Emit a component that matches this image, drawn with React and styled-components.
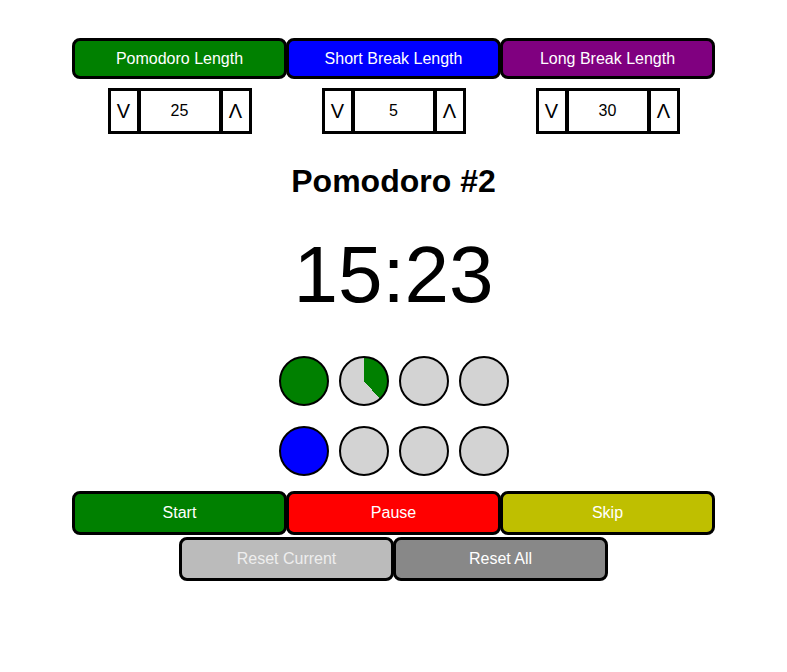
import styled, { createGlobalStyle } from 'styled-components';

const GlobalStyle = createGlobalStyle`
    body {
        margin: 0;
        font-family: "Liberation Sans", Arial, sans-serif;
        background: #fff;
    }
`

const Page = styled.div`
    display: flex;
    flex-direction: column;
    align-items: center;
    padding-top: 38px;
`

const Row = styled.div`
    display: flex;
    justify-content: center;
    margin-top: ${props => props.$top || 0}px;
`

const Column = styled.div`
    display: flex;
    flex-direction: column;
    align-items: center;
    gap: 9px;
`

const Button = styled.button`
    width: 215px;
    height: ${props => props.$height || 44}px;
    border: 3px solid #000;
    border-radius: 8px;
    background: ${props => props.$bg};
    color: ${props => props.$color || '#fff'};
    font-family: inherit;
    font-size: 16px;
    padding: 0;
    margin: 0 -0.5px;
`

const Stepper = styled.div`
    display: flex;
    height: 46px;
`

const Arrow = styled.button`
    width: 32px;
    height: 46px;
    border: 3px solid #000;
    background: #fff;
    color: #000;
    font-family: inherit;
    font-size: 20px;
    padding: 0;
`

const Value = styled.input`
    box-sizing: border-box;
    width: 80px;
    height: 46px;
    border: 3px solid #000;
    border-left: 1px solid #000;
    border-right: 1px solid #000;
    text-align: center;
    font-family: inherit;
    font-size: 16px;
    color: #000;
    padding: 0;
`

const Title = styled.h1`
    font-size: 32px;
    font-weight: bold;
    margin: 29px 0 0;
`

const Timer = styled.div`
    font-size: 80px;
    margin-top: 29px;
    line-height: 92px;
`

const Dots = styled.div`
    display: flex;
    gap: 10px;
    margin-top: ${props => props.$top}px;
`

const Dot = styled.div`
    box-sizing: border-box;
    width: 50px;
    height: 50px;
    border-radius: 50%;
    border: 2px solid #000;
    background: ${props => props.$fill || '#d3d3d3'};
`

const lengths = [
    { label: 'Pomodoro Length', bg: '#008000', value: 25 },
    { label: 'Short Break Length', bg: '#0000ff', value: 5 },
    { label: 'Long Break Length', bg: '#800080', value: 30 },
]

function App() {
    // 9:37 of the 25 minutes gone
    const progress = 577 / 1500 * 360

    return (
        <>
            <GlobalStyle />
            <Page>
                <Row>
                    {lengths.map(l => (
                        <Column key={l.label}>
                            <Button $bg={l.bg} $height={41}>{l.label}</Button>
                            <Stepper>
                                <Arrow>V</Arrow>
                                <Value value={l.value} readOnly />
                                <Arrow>Λ</Arrow>
                            </Stepper>
                        </Column>
                    ))}
                </Row>
                <Title>Pomodoro #2</Title>
                <Timer>15:23</Timer>
                <Dots $top={35}>
                    <Dot $fill="#008000" />
                    <Dot $fill={`conic-gradient(#008000 0deg ${progress}deg, #d3d3d3 ${progress}deg 360deg)`} />
                    <Dot />
                    <Dot />
                </Dots>
                <Dots $top={20}>
                    <Dot $fill="#0000ff" />
                    <Dot />
                    <Dot />
                    <Dot />
                </Dots>
                <Row $top={15}>
                    <Button $bg="#008000">Start</Button>
                    <Button $bg="#ff0000">Pause</Button>
                    <Button $bg="#bfbf00">Skip</Button>
                </Row>
                <Row $top={2}>
                    <Button $bg="#bbbbbb" $color="#eeeeee">Reset Current</Button>
                    <Button $bg="#888888">Reset All</Button>
                </Row>
            </Page>
        </>
    )
}

export default App
